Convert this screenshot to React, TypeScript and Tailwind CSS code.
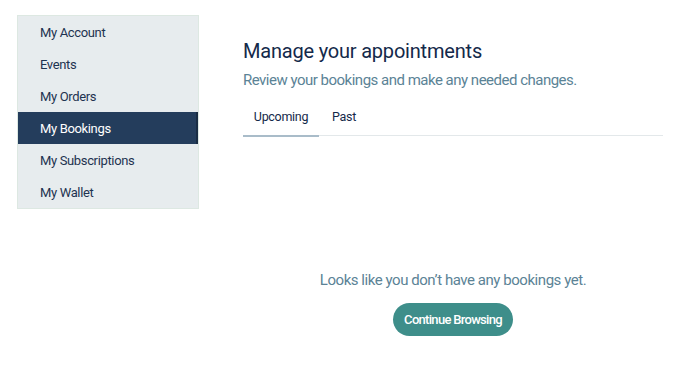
import React from "react";

const items = ["My Account", "Events", "My Orders", "My Bookings", "My Subscriptions", "My Wallet"];

export default function App() {
  return (
    <div className="w-[690px] h-[372px] bg-white flex pl-[17px] pt-[15px]" style={{ fontFamily: "Roboto, 'Liberation Sans', sans-serif" }}>
      <div className="w-[182px] h-[194px] bg-[#e7ecee] border border-[#dde8e2] flex flex-col shrink-0">
        {items.map((it) => (
          <div
            key={it}
            className={
              it === "My Bookings"
                ? "h-[32px] flex items-center pl-[22px] pt-px text-[13px] tracking-[-0.35px] text-white bg-[#243d5c] border-r-2 border-[#1a2d44]"
                : "h-[32px] flex items-center pl-[22px] pt-px text-[13px] tracking-[-0.35px] text-[#1e3350]"
            }
          >
            {it}
          </div>
        ))}
      </div>
      <div className="ml-[44px] w-[420px] flex flex-col">
        <h1 className="mt-[22px] text-[20px] leading-[28px] text-[#14294a] tracking-[-0.2px]">Manage your appointments</h1>
        <p className="mt-[4px] text-[15px] leading-[22px] text-[#5b8396] tracking-[-0.5px]">Review your bookings and make any needed changes.</p>
        <div className="mt-[15px] flex border-b border-[#e3e8ea] h-[30px]">
          <div className="w-[76px] flex justify-center text-[12.5px] tracking-[-0.3px] text-[#14294a] border-b-2 border-[#a9bcc9] -mb-px h-[31px] pt-[2px]">Upcoming</div>
          <div className="ml-[13px] text-[12.5px] tracking-[-0.3px] text-[#14294a] pt-[2px]">Past</div>
        </div>
        <div className="mt-[133px] flex flex-col items-center">
          <p className="text-[15px] leading-[22px] text-[#5b8396] tracking-[-0.45px]">Looks like you don’t have any bookings yet.</p>
          <button className="mt-[12px] w-[120px] h-[33px] rounded-full bg-[#3e8e8a] text-white text-[13px] font-medium tracking-[-0.7px]">Continue Browsing</button>
        </div>
      </div>
    </div>
  );
}
